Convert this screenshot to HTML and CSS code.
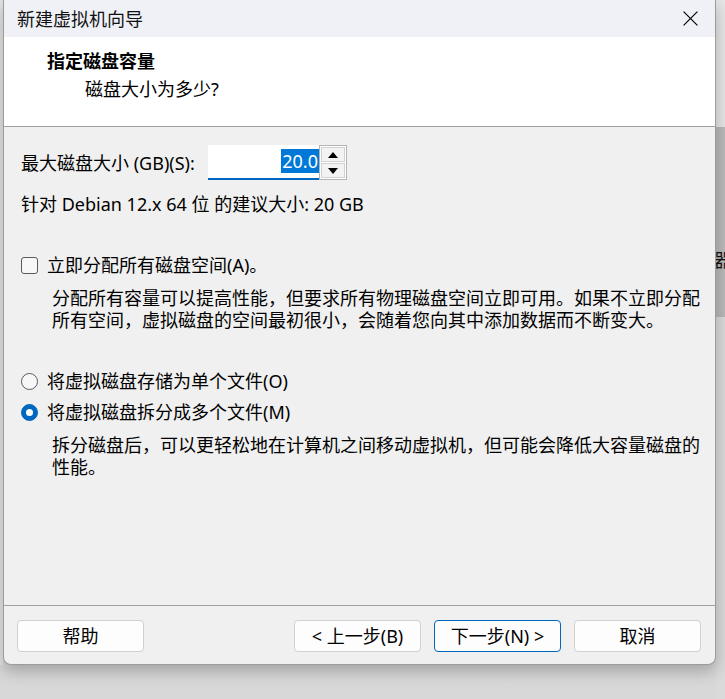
FILE: index.html
```html
<!DOCTYPE html>
<html lang="zh-CN">
<head>
<meta charset="utf-8">
<title>新建虚拟机向导</title>
<link rel="stylesheet" href="styles.css">
</head>
<body>
<div class="desk">
  <div class="edge-left"></div>
  <div class="dialog">
    <div class="titlebar">
      <span class="title">新建虚拟机向导</span>
      <span class="close">
        <svg width="15" height="15" viewBox="0 0 15 15"><path d="M0.6 0.6 L14.4 14.4 M14.4 0.6 L0.6 14.4" stroke="#000" stroke-width="1.2" fill="none"/></svg>
      </span>
    </div>
    <div class="header">
      <div class="h-title">指定磁盘容量</div>
      <div class="h-sub">磁盘大小为多少?</div>
    </div>
    <div class="body">
      <div class="size-row">
        <span class="lbl">最大磁盘大小 (GB)(S):</span>
        <div class="num-input"><span class="sel">20.0</span></div>
        <div class="spinner">
          <span class="sb"><span class="tri up"></span></span>
          <span class="sb"><span class="tri down"></span></span>
        </div>
      </div>
      <div class="hint">针对 Debian 12.x 64 位 的建议大小: 20 GB</div>
      <div class="opt check-row"><span class="checkbox"></span><span>立即分配所有磁盘空间(A)。</span></div>
      <p class="desc desc-a">分配所有容量可以提高性能，但要求所有物理磁盘空间立即可用。如果不立即分配<br>所有空间，虚拟磁盘的空间最初很小，会随着您向其中添加数据而不断变大。</p>
      <div class="opt radio-one"><span class="radio"></span><span>将虚拟磁盘存储为单个文件(O)</span></div>
      <div class="opt radio-two"><span class="radio on"></span><span>将虚拟磁盘拆分成多个文件(M)</span></div>
      <p class="desc desc-b">拆分磁盘后，可以更轻松地在计算机之间移动虚拟机，但可能会降低大容量磁盘的<br>性能。</p>
    </div>
    <div class="footer">
      <button class="btn">帮助</button>
      <div class="spacer"></div>
      <button class="btn">&lt; 上一步(B)</button>
      <button class="btn primary">下一步(N) &gt;</button>
      <button class="btn">取消</button>
    </div>
  </div>
  <div class="edge-right">
    <div class="er-top"></div>
    <div class="er-mid"><span class="peek">器</span></div>
    <div class="er-bottom"></div>
  </div>
</div>
</body>
</html>
```

FILE: styles.css
```css
* { box-sizing: border-box; }
html, body { margin: 0; padding: 0; }
body {
  width: 725px;
  height: 699px;
  overflow: hidden;
  background: linear-gradient(#cfcfcf, #d8d8d8);
  font-family: "Noto Sans", "Noto Sans CJK SC", sans-serif;
  font-size: 18px;
  color: #000;
}
.desk {
  display: grid;
  grid-template-columns: 3px 713px 9px;
  grid-template-rows: 665px 34px;
  height: 699px;
}
.edge-left {
  grid-column: 1;
  grid-row: 1;
  background: #e4e4e4;
}
.dialog {
  grid-column: 2;
  grid-row: 1;
  z-index: 1;
  display: flex;
  flex-direction: column;
  background: #f0f0f0;
  border: 1px solid #9c9c9c;
  border-top: none;
  border-radius: 0 0 8px 8px;
  box-shadow: 0 6px 16px rgba(0, 0, 0, 0.25);
  overflow: hidden;
}
.titlebar {
  height: 37px;
  flex: none;
  display: flex;
  align-items: center;
  padding: 0 17px 0 13px;
  background: #eff1f7;
}
.title {
  font-size: 18px;
  line-height: 24px;
  color: #111;
}
.close {
  margin-left: auto;
  display: flex;
  align-items: center;
  height: 15px;
}
.header {
  height: 90px;
  flex: none;
  background: #fff;
  border-bottom: 1px solid #a0a0a0;
  padding: 12px 0 0 43px;
}
.h-title {
  font-weight: 700;
  line-height: 24px;
}
.h-sub {
  margin-top: 4px;
  padding-left: 38px;
  line-height: 24px;
}
.body {
  height: 478px;
  flex: none;
  padding: 18px 0 0 17px;
}
.size-row {
  display: flex;
  align-items: center;
  height: 35px;
}
.lbl {
  width: 187px;
  line-height: 24px;
  white-space: nowrap;
}
.num-input {
  width: 111px;
  height: 35px;
  background: #fff;
  border-bottom: 2px solid #0067c0;
  display: flex;
  align-items: center;
  justify-content: flex-end;
  padding: 0 0 2px 0;
}
.sel {
  background: #0078d7;
  color: #fff;
  line-height: 24px;
  padding: 0 1px;
}
.spinner {
  width: 28px;
  height: 35px;
  border: 1px solid #b4b4b4;
  background: #fff;
  display: flex;
  flex-direction: column;
  gap: 1px;
  padding: 1px;
}
.sb {
  flex: 1;
  background: #f3f3f3;
  border: 1px solid #d2d2d2;
  display: flex;
  align-items: center;
  justify-content: center;
}
.tri {
  width: 0;
  height: 0;
  border-left: 5px solid transparent;
  border-right: 5px solid transparent;
}
.tri.up { border-bottom: 6px solid #000; }
.tri.down { border-top: 6px solid #000; }
.hint {
  margin-top: 12px;
  line-height: 24px;
  white-space: nowrap;
}
.opt {
  display: flex;
  align-items: center;
  line-height: 24px;
  white-space: nowrap;
}
.check-row { margin-top: 37px; }
.checkbox {
  width: 17px;
  height: 17px;
  border: 1px solid #5a5a5a;
  border-radius: 3px;
  background: #f7f7f7;
  margin-right: 9px;
  flex: none;
}
.radio {
  width: 17px;
  height: 17px;
  border: 1px solid #5a5a5a;
  border-radius: 50%;
  background: #f7f7f7;
  margin-right: 9px;
  flex: none;
  display: flex;
  align-items: center;
  justify-content: center;
}
.radio.on {
  background: #0067c0;
  border-color: #0067c0;
}
.radio.on::after {
  content: "";
  width: 7px;
  height: 7px;
  border-radius: 50%;
  background: #fff;
}
.desc {
  margin: 10px 0 0 31px;
  line-height: 22px;
  white-space: nowrap;
}
.radio-one { margin-top: 38px; }
.radio-two { margin-top: 7px; }
.footer {
  height: 59px;
  flex: none;
  border-top: 1px solid #a0a0a0;
  padding: 14px 14px 0 13px;
  display: flex;
  align-items: flex-start;
  gap: 13px;
}
.spacer { flex: 1; }
.btn {
  width: 127px;
  height: 32px;
  background: #fdfdfd;
  border: 1px solid #d0d0d0;
  border-radius: 4px;
  font-family: "Noto Sans", "Noto Sans CJK SC", sans-serif;
  font-size: 18px;
  line-height: 24px;
  color: #000;
  padding: 0;
  display: flex;
  align-items: center;
  justify-content: center;
}
.btn.primary { border-color: #0067c0; }
.edge-right {
  grid-column: 3;
  grid-row: 1 / 3;
  display: flex;
  flex-direction: column;
}
.er-top { height: 127px; background: #e6e6e6; }
.er-mid {
  height: 190px;
  background: #b9b9b9;
  padding-top: 121px;
  overflow: hidden;
  white-space: nowrap;
}
.peek {
  display: block;
  line-height: 24px;
  font-size: 18px;
  color: #111;
  margin-left: -2px;
}
.er-bottom { flex: 1; background: #dadada; }
```
